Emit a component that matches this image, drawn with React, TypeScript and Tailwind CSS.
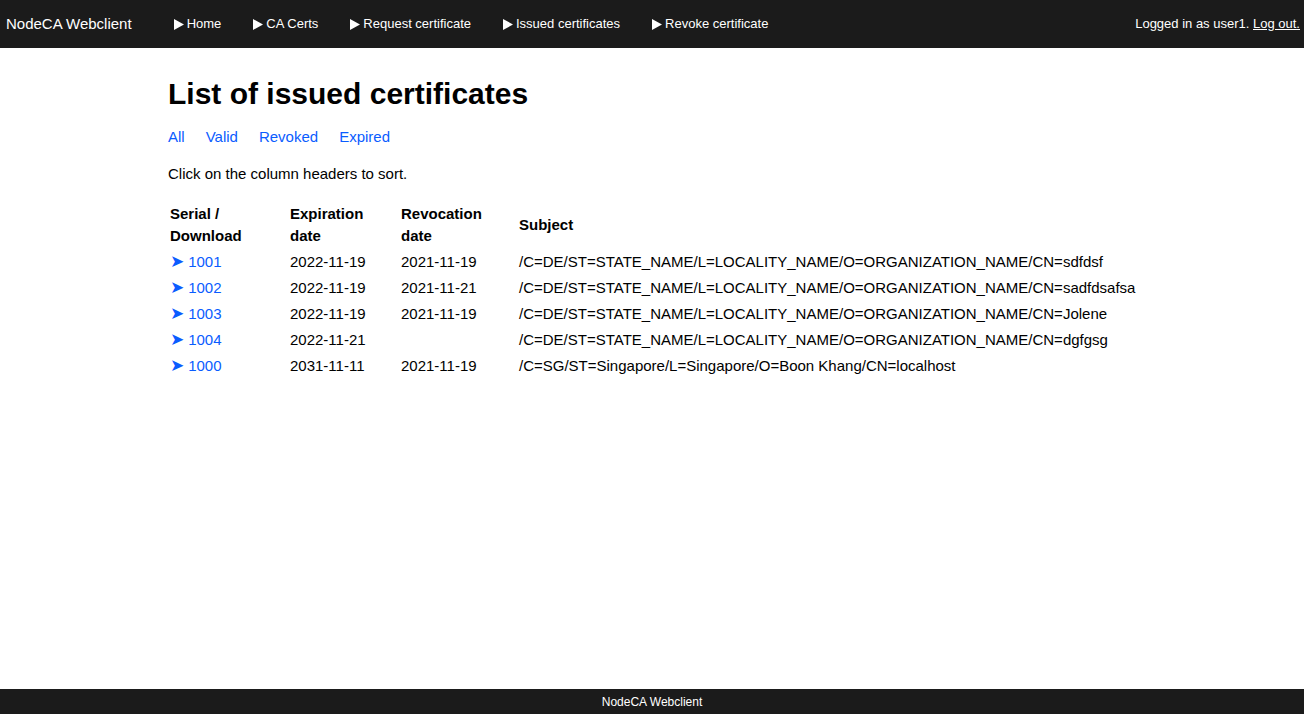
import React from "react";

const navItems = ["Home", "CA Certs", "Request certificate", "Issued certificates", "Revoke certificate"];

const certs = [
  { serial: "1001", expires: "2022-11-19", revoked: "2021-11-19", subject: "/C=DE/ST=STATE_NAME/L=LOCALITY_NAME/O=ORGANIZATION_NAME/CN=sdfdsf" },
  { serial: "1002", expires: "2022-11-19", revoked: "2021-11-21", subject: "/C=DE/ST=STATE_NAME/L=LOCALITY_NAME/O=ORGANIZATION_NAME/CN=sadfdsafsa" },
  { serial: "1003", expires: "2022-11-19", revoked: "2021-11-19", subject: "/C=DE/ST=STATE_NAME/L=LOCALITY_NAME/O=ORGANIZATION_NAME/CN=Jolene" },
  { serial: "1004", expires: "2022-11-21", revoked: "", subject: "/C=DE/ST=STATE_NAME/L=LOCALITY_NAME/O=ORGANIZATION_NAME/CN=dgfgsg" },
  { serial: "1000", expires: "2031-11-11", revoked: "2021-11-19", subject: "/C=SG/ST=Singapore/L=Singapore/O=Boon Khang/CN=localhost" },
];

function Triangle() {
  return (
    <svg width="10" height="11" viewBox="0 0 10 11" className="shrink-0">
      <path d="M0 0 L10 5.5 L0 11 Z" fill="#fff" />
    </svg>
  );
}

export default function App() {
  return (
    <div className="flex min-h-screen flex-col bg-white text-black" style={{ fontFamily: '"Liberation Sans", Arial, sans-serif' }}>
      {/* Header */}
      <header className="flex h-12 shrink-0 items-center bg-[#1b1b1b] pl-[6px] pr-[4px] text-white">
        <span className="text-[15px]">NodeCA Webclient</span>
        <nav className="ml-[42px] flex items-center gap-[32px] text-[13px]">
          {navItems.map((item) => (
            <a key={item} href="#" className="flex items-center gap-[3px] text-white">
              <Triangle />
              <span>{item}</span>
            </a>
          ))}
        </nav>
        <div className="ml-auto text-[13px]">
          Logged in as user1.{" "}
          <a href="#" className="underline">Log out.</a>
        </div>
      </header>

      {/* Main */}
      <main className="flex-1 pl-[168px] pt-[28px]">
        <h1 className="text-[30px] font-bold leading-[36px]">List of issued certificates</h1>
        <div className="mt-[14px] flex gap-[21px] text-[15px] text-[#0a5cff]">
          <a href="#">All</a>
          <a href="#">Valid</a>
          <a href="#">Revoked</a>
          <a href="#">Expired</a>
        </div>
        <p className="mt-[14px] text-[15px]">Click on the column headers to sort.</p>

        <table className="mt-[16px] border-collapse text-[15px]">
          <thead>
            <tr className="text-left font-bold leading-[22px]">
              <th className="w-[120px] px-[2px] py-[2px] align-middle">Serial /<br />Download</th>
              <th className="w-[111px] px-[2px] py-[2px] align-middle">Expiration<br />date</th>
              <th className="w-[118px] px-[2px] py-[2px] align-middle">Revocation<br />date</th>
              <th className="px-[2px] py-[2px] align-middle">Subject</th>
            </tr>
          </thead>
          <tbody>
            {certs.map((c) => (
              <tr key={c.serial} className="h-[26px] leading-[22px]">
                <td className="px-[2px] py-[2px]">
                  <a href="#" className="text-[#0a5cff]">
                    <span className="text-[17px] leading-[22px]">➤</span> {c.serial}
                  </a>
                </td>
                <td className="px-[2px] py-[2px]">{c.expires}</td>
                <td className="px-[2px] py-[2px]">{c.revoked}</td>
                <td className="px-[2px] py-[2px]">{c.subject}</td>
              </tr>
            ))}
          </tbody>
        </table>
      </main>

      {/* Footer */}
      <footer className="flex h-[25px] shrink-0 items-center justify-center bg-[#1b1b1b] text-[12px] text-white">
        NodeCA Webclient
      </footer>
    </div>
  );
}
